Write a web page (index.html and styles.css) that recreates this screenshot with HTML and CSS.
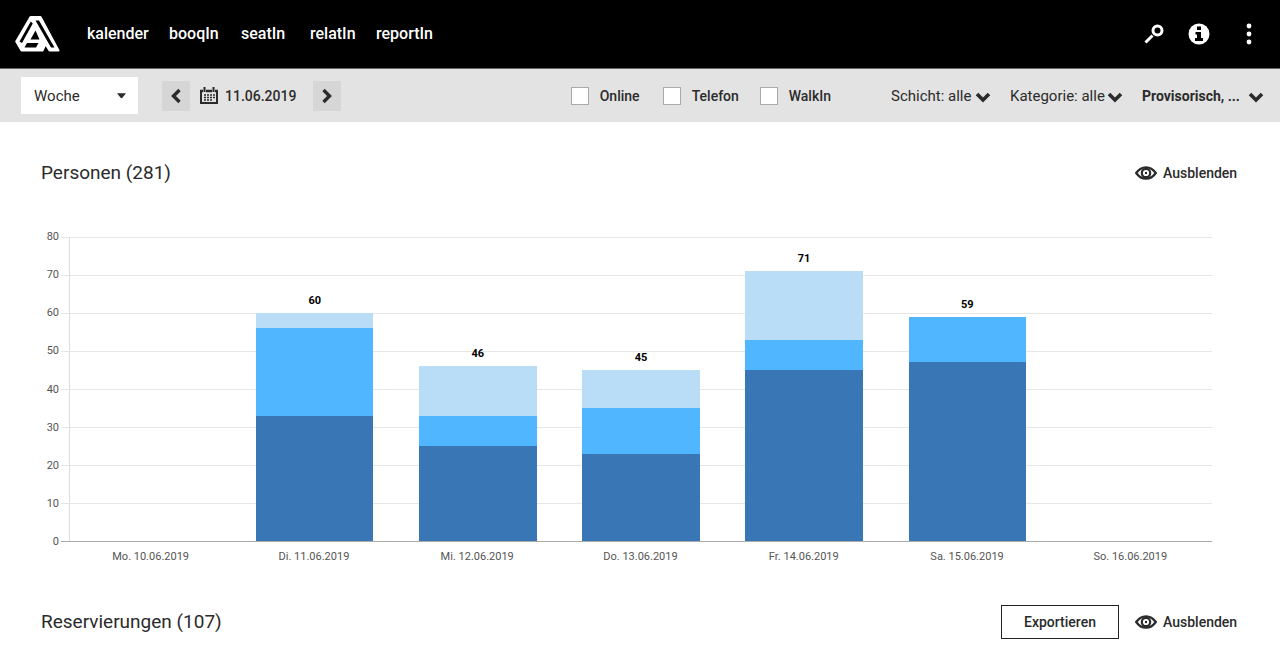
FILE: index.html
```html
<!DOCTYPE html>
<html lang="de">
<head>
<meta charset="utf-8">
<meta name="viewport" content="width=device-width, initial-scale=1">
<title>reportIn</title>
<link rel="stylesheet" href="styles.css">
</head>
<body>
<svg class="sprite" aria-hidden="true">
  <symbol id="chevron" viewBox="0 0 16 12"><path d="M2 3l6 6 6-6" fill="none" stroke="currentColor" stroke-width="3.600"/></symbol>
  <symbol id="eye" viewBox="0 0 22 14"><path d="M1.200 7C4 3 7.200 1.300 11 1.300S18 3 20.800 7C18 11 14.800 12.700 11 12.700S4 11 1.200 7z" fill="none" stroke="currentColor" stroke-width="2.300"/><circle cx="11" cy="7" r="4.200" fill="none" stroke="currentColor" stroke-width="2.200"/><circle cx="11" cy="7" r="1.200" fill="currentColor"/></symbol>
</svg>
<header class="topbar">
  <a class="logo" href="#" aria-label="Startseite">
    <svg width="46" height="38" viewBox="0 0 46 38" stroke-linejoin="round">
      <path d="M15.500 2H25.500L43.500 35.500H34.500L30.500 29L27.500 35.500H6.500L1.200 26.500z" fill="#fff" stroke="#fff" stroke-width="2"/>
      <path d="M20.500 5.500H24L39.500 32.500H36zM15.800 6.500L17.800 8.500L7 28L4.500 26.500zM20.500 15.500L24.500 24.500H15.500zM12 28H23.500L21 32.500H9.500z" fill="#000"/>
    </svg>
  </a>
  <nav class="nav">
    <a href="#">kalender</a>
    <a href="#">booqIn</a>
    <a href="#">seatIn</a>
    <a href="#">relatIn</a>
    <a href="#">reportIn</a>
  </nav>
  <div class="actions">
    <button type="button" aria-label="Suchen"><svg width="20" height="20" viewBox="0 0 20 20" fill="none" stroke="currentColor"><circle cx="13.500" cy="6.500" r="4.500" stroke-width="3"/><path d="M8.500 11.500L1.500 18.500" stroke-width="3"/></svg></button>
    <button type="button" aria-label="Information"><svg width="22" height="22" viewBox="0 0 22 22"><circle cx="11" cy="11" r="10.500" fill="#fff"/><path d="M9 3.500h4v3.500H9zM7.500 9H13v6h2v3H7v-3h2v-3.500H7.500z" fill="#000"/></svg></button>
    <button type="button" aria-label="Mehr"><svg width="6" height="22" viewBox="0 0 6 22" fill="currentColor"><circle cx="3" cy="3" r="2.400"/><circle cx="3" cy="11" r="2.400"/><circle cx="3" cy="19" r="2.400"/></svg></button>
  </div>
</header>

<form class="toolbar">
  <div class="picker period">
    <select aria-label="Zeitraum"><option>Woche</option></select>
    <svg class="caret" viewBox="0 0 10 6"><path d="M0 0h10L6 5q-1 1-2 0z" fill="currentColor"/></svg>
  </div>
  <div class="dates">
    <button class="step" type="button" aria-label="Zurück"><svg width="12" height="16" viewBox="0 0 12 16"><path d="M9.500 2L3.500 8l6 6" fill="none" stroke="currentColor" stroke-width="3.400"/></svg></button>
    <button class="date" type="button">
      <svg width="18" height="17" viewBox="0 0 18 17" fill="none" stroke="currentColor"><path d="M1 3v13h16V3" stroke-width="2"/><path d="M0 4h3M6 4h6M15 4h3" stroke-width="2.400"/><path d="M4.500 0v5M13.500 0v5" stroke-width="2"/><path d="M4 8h2M7 8h2M10 8h2M13 8h2M4 10.500h2M7 10.500h2M10 10.500h2M13 10.500h2M4 13h2M7 13h2M10 13h2" stroke-width="1.500"/></svg>
      <span>11.06.2019</span>
    </button>
    <button class="step" type="button" aria-label="Weiter"><svg width="12" height="16" viewBox="0 0 12 16"><path d="M2.500 2l6 6-6 6" fill="none" stroke="currentColor" stroke-width="3.400"/></svg></button>
  </div>
  <div class="checks">
    <label><input type="checkbox">Online</label>
    <label><input type="checkbox">Telefon</label>
    <label><input type="checkbox">WalkIn</label>
  </div>
  <div class="filters">
    <div class="picker shift"><select aria-label="Schicht"><option>Schicht: alle</option></select><svg class="arrow"><use href="#chevron"/></svg></div>
    <div class="picker category"><select aria-label="Kategorie"><option>Kategorie: alle</option></select><svg class="arrow"><use href="#chevron"/></svg></div>
    <div class="picker status"><select aria-label="Status"><option>Provisorisch, ...</option></select><svg class="arrow"><use href="#chevron"/></svg></div>
  </div>
</form>

<main class="content">
  <section>
    <div class="section-head">
      <h2>Personen (281)</h2>
      <button class="toggle" type="button"><svg width="22" height="14"><use href="#eye"/></svg>Ausblenden</button>
    </div>
    <div class="chart">
      <div class="axis"><span>80</span><span>70</span><span>60</span><span>50</span><span>40</span><span>30</span><span>20</span><span>10</span><span>0</span></div>
      <div class="plot">
        <div class="grid"><i></i><i></i><i></i><i></i><i></i><i></i><i></i><i></i></div>
        <div class="bars">
          <div class="day"></div>
          <div class="day"><b>60</b><div class="bar" style="height:75%"><i class="light" style="flex-grow:4"></i><i class="mid" style="flex-grow:23"></i><i class="dark" style="flex-grow:33"></i></div></div>
          <div class="day"><b>46</b><div class="bar" style="height:57.5%"><i class="light" style="flex-grow:13"></i><i class="mid" style="flex-grow:8"></i><i class="dark" style="flex-grow:25"></i></div></div>
          <div class="day"><b>45</b><div class="bar" style="height:56.25%"><i class="light" style="flex-grow:10"></i><i class="mid" style="flex-grow:12"></i><i class="dark" style="flex-grow:23"></i></div></div>
          <div class="day"><b>71</b><div class="bar" style="height:88.75%"><i class="light" style="flex-grow:18"></i><i class="mid" style="flex-grow:8"></i><i class="dark" style="flex-grow:45"></i></div></div>
          <div class="day"><b>59</b><div class="bar" style="height:73.75%"><i class="mid" style="flex-grow:12"></i><i class="dark" style="flex-grow:47"></i></div></div>
          <div class="day"></div>
        </div>
      </div>
      <div class="days"><span>Mo. 10.06.2019</span><span>Di. 11.06.2019</span><span>Mi. 12.06.2019</span><span>Do. 13.06.2019</span><span>Fr. 14.06.2019</span><span>Sa. 15.06.2019</span><span>So. 16.06.2019</span></div>
    </div>
  </section>
  <section>
    <div class="section-head">
      <h2>Reservierungen (107)</h2>
      <button class="export" type="button">Exportieren</button>
      <button class="toggle" type="button"><svg width="22" height="14"><use href="#eye"/></svg>Ausblenden</button>
    </div>
  </section>
</main>
</body>
</html>
```
FILE: styles.css
```css
* { box-sizing: border-box; }
body {
  margin: 0;
  background: #fff;
  color: #2b2b2b;
  font: 500 14px/20px Roboto, "Liberation Sans", sans-serif;
}
button, select, input { font: inherit; color: inherit; margin: 0; }
button { border: 0; background: none; padding: 0; cursor: pointer; }
a { color: inherit; text-decoration: none; }
svg { display: block; flex: none; }
.sprite { position: absolute; width: 0; height: 0; }

.topbar {
  display: flex;
  align-items: center;
  height: 69px;
  padding: 0 28px 0 15px;
  background: #000;
  border-bottom: 1px solid #666;
  color: #fff;
}
.nav {
  display: grid;
  grid-template-columns: 82px 72px 69px 66px auto;
  margin-left: 26px;
  font-size: 16px;
}
.actions { display: flex; align-items: center; gap: 24px; margin-left: auto; }
.actions button:last-child { margin-left: 12px; }

.toolbar {
  display: flex;
  align-items: center;
  height: 53px;
  padding: 0 16px 0 21px;
  background: #e3e3e3;
}
.picker { position: relative; }
.picker select {
  width: 100%;
  appearance: none;
  border: 0;
  border-radius: 0;
  background: transparent;
  padding: 0;
  text-overflow: clip;
  font-size: 15px;
  font-weight: 400;
}
.period { width: 117px; }
.period select { height: 37px; padding: 0 13px; background: #fff; }
.caret { position: absolute; right: 12px; top: 16px; width: 9px; height: 6px; pointer-events: none; }
.dates { display: flex; align-items: center; margin-left: 24px; }
.step {
  display: grid;
  place-items: center;
  width: 28px;
  height: 30px;
  background: #d6d6d6;
}
.date { display: flex; align-items: center; gap: 7px; width: 123px; padding-left: 10px; }
.checks {
  display: grid;
  grid-template-columns: 92px 97px auto;
  margin-left: auto;
}
.checks label { display: flex; align-items: center; gap: 11px; }
.checks input {
  appearance: none;
  width: 18px;
  height: 18px;
  border: 1px solid #aaa;
  background: #fff;
}
.filters { display: flex; gap: 19px; margin-left: 60px; }
.arrow { position: absolute; right: 0; top: 5px; width: 16px; height: 12px; pointer-events: none; }
.shift { width: 100px; }
.category { width: 113px; }
.status { width: 122px; }
.status select { font-size: 14px; font-weight: 700; }

.content { padding: 34px 41px 20px; }
.section-head { display: flex; align-items: center; height: 34px; }
.section-head h2 { margin: 0 auto 0 0; font-size: 19px; line-height: 24px; font-weight: 400; }
.toggle { display: flex; align-items: center; gap: 6px; min-width: 104px; }
.export {
  width: 118px;
  height: 34px;
  margin-right: 16px;
  border: 1px solid #222;
}

.chart {
  display: grid;
  grid-template-columns: 18px 1fr;
  column-gap: 10px;
  margin: 47px 27px 41px 0;
  font-size: 11px;
  font-weight: 400;
  line-height: 14px;
  color: #555;
}
.axis {
  display: flex;
  flex-direction: column;
  justify-content: space-between;
  margin: -7px 0;
  text-align: right;
}
.plot {
  display: grid;
  height: 305px;
  border-left: 1px solid #ddd;
}
.grid, .bars { grid-area: 1 / 1; min-height: 0; }
.grid { display: flex; flex-direction: column; margin-left: -9px; border-bottom: 1px solid #aaa; }
.grid i { flex: 1; border-top: 1px solid #e6e6e6; }
.bars { display: flex; margin-bottom: 1px; z-index: 1; }
.day {
  display: flex;
  flex: 1;
  flex-direction: column;
  align-items: center;
  justify-content: flex-end;
}
.day b { margin-bottom: 5px; color: #000; }
.bar { display: flex; flex: none; flex-direction: column; width: 72%; }
.bar i { flex-basis: 0; }
.light { background: #b9dcf7; }
.mid { background: #4fb6ff; }
.dark { background: #3876b5; }
.days { grid-column: 2; display: flex; margin-top: 8px; }
.days span { flex: 1; text-align: center; }
```
